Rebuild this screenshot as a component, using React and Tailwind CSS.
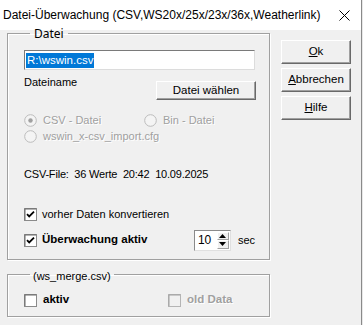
import React from "react";

const dis = "text-[#a0a0a0] [text-shadow:1px_1px_0_#ffffff]";

function Check({ checked, disabled }) {
  return (
    <svg width="13" height="13" viewBox="0 0 13 13" className="shrink-0">
      <rect x="0.5" y="0.5" width="12" height="12" fill={disabled ? "#f0f0f0" : "#ffffff"} stroke={disabled ? "#b4b4b4" : "#8a8a8a"} />
      <path d="M1 12V1h11" fill="none" stroke={disabled ? "#a0a0a0" : "#6a6a6a"} />
      {checked && <path d="M3 6.2l2.2 2.2L10 3.6" fill="none" stroke="#000" strokeWidth="1.8" />}
    </svg>
  );
}

function Radio({ checked }) {
  return (
    <svg width="13" height="13" viewBox="0 0 13 13" className="shrink-0">
      <circle cx="6.5" cy="6.5" r="5.8" fill="#f4f4f4" stroke="#bcbcbc" />
      {checked && <circle cx="6.5" cy="6.5" r="2.2" fill="#a0a0a0" />}
    </svg>
  );
}

function Btn({ children, className = "" }) {
  return (
    <div
      className={
        "flex items-center justify-center bg-[#f0f0f0] border-t border-l border-t-white border-l-white border-b border-r border-b-[#696969] border-r-[#696969] shadow-[inset_-1px_-1px_0_#a0a0a0] text-[11.5px] text-black " +
        className
      }
    >
      {children}
    </div>
  );
}

function Spinner() {
  return (
    <div className="flex h-[21px] w-[38px] bg-white border border-t-[#8a8a8a] border-l-[#8a8a8a] border-b-[#e0e0e0] border-r-[#e0e0e0]">
      <div className="flex-1 pl-[3px] text-[12px] leading-[19px]">10</div>
      <div className="flex flex-col w-[13px] py-[1px] pr-[1px]">
        <div className="flex-1 flex items-center justify-center bg-[#f0f0f0] border-b border-r border-[#a0a0a0] border-t border-t-white border-l border-l-white">
          <svg width="7" height="4" viewBox="0 0 7 4"><path d="M0 4L3.5 0L7 4Z" fill="#000" /></svg>
        </div>
        <div className="flex-1 flex items-center justify-center bg-[#f0f0f0] border-b border-r border-[#a0a0a0] border-t border-t-white border-l border-l-white">
          <svg width="7" height="4" viewBox="0 0 7 4"><path d="M0 0L3.5 4L7 0Z" fill="#000" /></svg>
        </div>
      </div>
    </div>
  );
}

export default function App() {
  return (
    <div className="w-[363px] h-[325px] bg-[#f0f0f0] overflow-hidden flex font-['Liberation_Sans',Arial,sans-serif] text-black">
      <div className="w-[361px] flex flex-col">
        {/* title bar */}
        <div className="h-[30px] bg-white flex items-center justify-between pl-[3px] pr-[11px] shrink-0">
          <span className="text-[12px] text-black">
            Datei-Überwachung (CSV,WS20x/25x/23x/36x,Weatherlink)
          </span>
          <svg width="11" height="11" viewBox="0 0 11 11">
            <path d="M0.5 0.5L10.5 10.5M10.5 0.5L0.5 10.5" stroke="#000" strokeWidth="1" />
          </svg>
        </div>

        <div className="flex">
          <div className="flex flex-col pl-[7px]">
            <fieldset className="w-[263px] h-[230px] border border-[#a0a0a0] shadow-[inset_1px_1px_0_#ffffff,1px_1px_0_#ffffff] pl-[16px] pr-[14px] m-0 flex flex-col min-w-0">
              <legend className="ml-[6px] px-[4px] leading-[6px] text-[12px] font-['Noto_Sans',sans-serif]">
                <span className="relative top-[1px]">Datei</span>
              </legend>
              <div className="mt-[14px] h-[20px] w-[231px] bg-white border border-[#7a7a7a] border-b-[#dcdcdc] border-r-[#dcdcdc] flex items-center pl-[1px]">
                <span className="bg-[#0078d7] text-white text-[11.5px] leading-[15px] px-[1px]">R:\wswin.csv</span>
              </div>
              <div className="mt-[6px] flex justify-between w-[232px]">
                <span className="text-[11px] leading-[12px]">Dateiname</span>
                <Btn className="mt-[5px] w-[100px] h-[19px]">Datei wählen</Btn>
              </div>
              <div className="mt-[12px] flex items-center h-[16px] text-[11px]">
                <div className="flex items-center gap-[6px] w-[120px]">
                  <Radio checked />
                  <span className={dis}>CSV - Datei</span>
                </div>
                <div className="flex items-center gap-[6px]">
                  <Radio />
                  <span className={dis}>Bin - Datei</span>
                </div>
              </div>
              <div className="flex items-center gap-[6px] h-[16px] text-[11px]">
                <Radio />
                <span className={dis}>wswin_x-csv_import.cfg</span>
              </div>
              <div className="mt-[24px] text-[11px] leading-[12px] tracking-[-0.2px]">
                CSV-File:&nbsp; 36 Werte&nbsp; 20:42&nbsp; 10.09.2025
              </div>
              <div className="mt-[26px] flex items-center gap-[5px] h-[16px] text-[11px]">
                <Check checked />
                <span>vorher Daten konvertieren</span>
              </div>
              <div className="mt-[7px] flex items-center h-[22px]">
                <div className="flex items-center gap-[5px] w-[175px]">
                  <Check checked />
                  <span className="text-[11.5px] font-bold">Überwachung aktiv</span>
                </div>
                <Spinner />
                <span className="ml-[7px] text-[11px]">sec</span>
              </div>
            </fieldset>

            <fieldset className="mt-[11px] w-[263px] h-[46px] border border-[#a0a0a0] shadow-[inset_1px_1px_0_#ffffff,1px_1px_0_#ffffff] pl-[16px] pr-[14px] m-0 flex flex-col min-w-0">
              <legend className="ml-[6px] px-[3px] leading-[6px] text-[11px]">
                <span className="relative top-[2px]">(ws_merge.csv)</span>
              </legend>
              <div className="mt-[15px] flex items-center h-[16px]">
                <div className="flex items-center gap-[6px] w-[144px]">
                  <Check />
                  <span className="text-[11.5px] font-bold">aktiv</span>
                </div>
                <div className="flex items-center gap-[6px]">
                  <Check disabled />
                  <span className={"text-[11.5px] font-bold " + dis}>old Data</span>
                </div>
              </div>
            </fieldset>
          </div>

          <div className="ml-[11px] mt-[10px] flex flex-col gap-[4px]">
            <Btn className="w-[70px] h-[24px]"><span><u>O</u>k</span></Btn>
            <Btn className="w-[70px] h-[24px]"><span><u>A</u>bbrechen</span></Btn>
            <Btn className="w-[70px] h-[24px]"><span><u>H</u>ilfe</span></Btn>
          </div>
        </div>
      </div>
      <div className="w-[1px] bg-[#8a8a8a]" />
      <div className="w-[1px] bg-[#e8e8e8]" />
    </div>
  );
}
